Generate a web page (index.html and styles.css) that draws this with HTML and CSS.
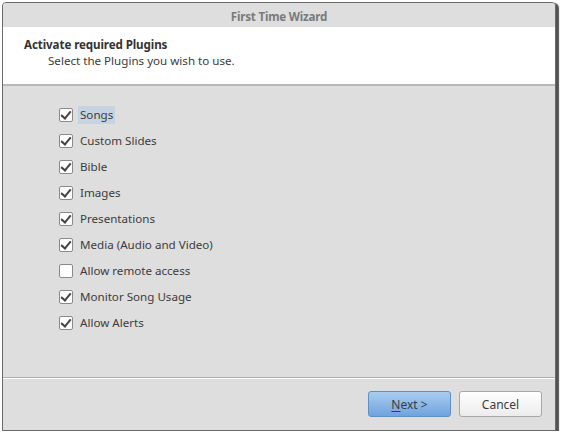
FILE: index.html
```html
<!DOCTYPE html>
<html>
<head>
<meta charset="utf-8">
<link rel="stylesheet" href="styles.css">
</head>
<body>
<div class="window">
  <div class="titlebar">First Time Wizard</div>
  <div class="header">
    <div class="h-title">Activate required Plugins</div>
    <div class="h-sub">Select the Plugins you wish to use.</div>
  </div>
  <div class="content">
    <ul class="list">
      <li><span class="cb on"></span><span class="lbl sel">Songs</span></li>
      <li><span class="cb on"></span><span class="lbl">Custom Slides</span></li>
      <li><span class="cb on"></span><span class="lbl">Bible</span></li>
      <li><span class="cb on"></span><span class="lbl">Images</span></li>
      <li><span class="cb on"></span><span class="lbl">Presentations</span></li>
      <li><span class="cb on"></span><span class="lbl">Media (Audio and Video)</span></li>
      <li><span class="cb"></span><span class="lbl">Allow remote access</span></li>
      <li><span class="cb on"></span><span class="lbl">Monitor Song Usage</span></li>
      <li><span class="cb on"></span><span class="lbl">Allow Alerts</span></li>
    </ul>
  </div>
  <div class="footer">
    <button class="btn primary"><u>N</u>ext &gt;</button>
    <button class="btn">Cancel</button>
  </div>
</div>
</body>
</html>
```
FILE: styles.css
```css
html, body { margin: 0; padding: 0; background: #ffffff; }
body { font-family: "Noto Sans", "Open Sans", sans-serif; font-size: 11.6px; color: #3c3c3c; }
.window {
  margin: 2px 0 0 2px;
  width: 552px;
  height: 427px;
  border: 1px solid #6a6a6a;
  border-radius: 4px 4px 0 0;
  background: #dedede;
  box-shadow: 2px 2px 1px 1px rgba(40,40,40,0.8);
  display: flex;
  flex-direction: column;
  overflow: hidden;
}
.titlebar {
  height: 24px;
  line-height: 27px;
  text-align: center;
  font-weight: bold;
  color: #7a7a7a;
  background: #dedede;
  letter-spacing: -0.2px;
}
.header {
  background: #ffffff;
  height: 59px;
  border-bottom: 2px solid #b8b8b8;
  padding-left: 21px;
  box-sizing: border-box;
  padding-top: 10px;
}
.h-title { font-weight: bold; line-height: 16px; color: #333; letter-spacing: -0.1px; }
.h-sub { padding-left: 24px; line-height: 16px; color: #3c3c3c; }
.content { flex: 1; }
.list { list-style: none; margin: 0; padding: 16px 0 0 56px; }
.list li { height: 26px; display: flex; align-items: center; }
.cb {
  width: 12px; height: 12px;
  border: 1px solid #8a8a8a;
  border-radius: 2px;
  background: #fff;
  position: relative;
  margin-right: 5px;
}
.cb.on::after {
  content: "";
  position: absolute;
  left: 3px; top: 0px;
  width: 4px; height: 8px;
  border: solid #444;
  border-width: 0 2px 2px 0;
  transform: rotate(40deg);
}
.lbl { padding: 1px 2px; line-height: 16px; }
.lbl.sel { background: #c6d4e2; }
.footer {
  height: 53px;
  border-top: 1px solid #b0b0b0;
  box-shadow: inset 0 1px 0 #ffffff;
  display: flex;
  justify-content: flex-end;
  align-items: flex-start;
  padding: 13px 13px 0 0;
  box-sizing: border-box;
  gap: 8px;
}
.btn {
  width: 83px; height: 26px;
  font-family: inherit; font-size: 12px;
  border: 1px solid #a8a8a8;
  border-radius: 3px;
  background: linear-gradient(#ffffff, #ececec);
  color: #3c3c3c;
  padding: 0;
}
.btn.primary {
  background: linear-gradient(#a9cdf0, #6fa3de);
  border-color: #5e8fc6;
}
.btn u { text-decoration-thickness: 1px; text-underline-offset: 2px; }
```
